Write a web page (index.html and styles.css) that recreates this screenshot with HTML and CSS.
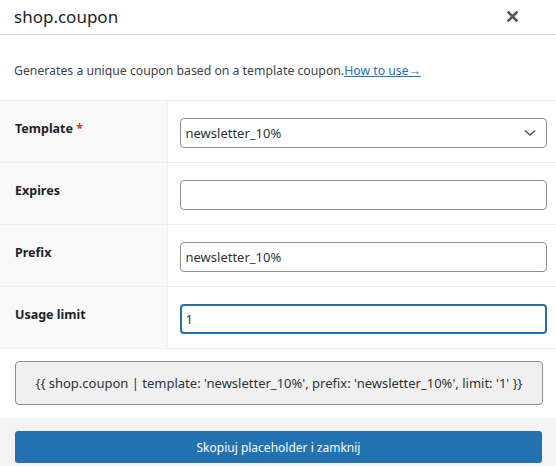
FILE: index.html
```html
<!DOCTYPE html>
<html>
<head>
    <meta charset="utf-8" />
    <title>shop.coupon</title>
    <link rel="stylesheet" href="styles.css">
</head>
<body>
    <div class="modal">
        <div class="modal_header">
            <h1>shop.coupon</h1>
            <button class="close_btn" type="button">
                <svg width="11" height="11" viewBox="0 0 11 11"><path d="M1.5 1.5L9.5 9.5M9.5 1.5L1.5 9.5" stroke="#50575e" stroke-width="2.6" stroke-linecap="square" /></svg>
            </button>
        </div>

        <p class="intro">Generates a unique coupon based on a template coupon.<a href="#">How to use→</a></p>

        <table class="form_table">
            <tr>
                <th>Template <span class="req">*</span></th>
                <td>
                    <div class="select_box">
                        <span>newsletter_10%</span>
                        <svg width="12" height="8" viewBox="0 0 12 8"><path d="M1 1.5L6 6L11 1.5" fill="none" stroke="#50575e" stroke-width="1.6" /></svg>
                    </div>
                </td>
            </tr>
            <tr>
                <th>Expires</th>
                <td><input type="text" class="field" value="" /></td>
            </tr>
            <tr>
                <th>Prefix</th>
                <td><input type="text" class="field" value="newsletter_10%" /></td>
            </tr>
            <tr>
                <th>Usage limit</th>
                <td><input type="text" class="field field_focus" value="1" /></td>
            </tr>
        </table>

        <div class="output">
            <div class="placeholder">{{ shop.coupon | template: 'newsletter_10%', prefix: 'newsletter_10%', limit: '1' }}</div>
        </div>

        <div class="footer">
            <button class="copy_btn" type="button">Skopiuj placeholder i zamknij</button>
        </div>
    </div>
</body>
</html>
```

FILE: styles.css
```css
* {
    font-family: "Noto Sans", "Open Sans", sans-serif;
    box-sizing: border-box;
}

body {
    margin: 0;
    background: #fff;
    color: #3c434a;
}

.modal {
    width: 556px;
    height: 466px;
    display: flex;
    flex-direction: column;
}

.modal_header {
    height: 35px;
    display: flex;
    align-items: center;
    justify-content: space-between;
    padding: 0 38px 2px 14px;
    border-bottom: 1px solid #dcdcde;
}

h1 {
    margin: 0;
    font-size: 17px;
    font-weight: 400;
    color: #1d2327;
}

.close_btn {
    border: none;
    background: none;
    padding: 0;
    display: flex;
}

.intro {
    margin: 0;
    padding: 28px 14px 21px;
    font-size: 12.25px;
    line-height: 16px;
    color: #3c434a;
}

    .intro a {
        color: #2271b1;
    }

.form_table {
    width: 100%;
    border-collapse: collapse;
    border-top: 1px solid #f0f0f0;
}

    .form_table tr {
        height: 62px;
        border-bottom: 1px solid #f0f0f0;
    }

    .form_table th {
        width: 167px;
        text-align: left;
        vertical-align: top;
        padding: 19px 10px 0 15px;
        background: #f9f9f9;
        border-right: 1px solid #f0f0f0;
        font-size: 12.5px;
        font-weight: 700;
        color: #1d2327;
    }

    .form_table td {
        vertical-align: top;
        padding: 17px 9px 0 12px;
    }

.req {
    color: #d63638;
}

.select_box,
.field {
    width: 100%;
    height: 30px;
    border: 1px solid #8c8f94;
    border-radius: 4px;
    background: #fff;
    font-size: 13px;
    color: #2c3338;
}

.select_box {
    display: flex;
    align-items: center;
    justify-content: space-between;
    padding: 0 10px 0 5px;
}

.field {
    display: block;
    padding: 0 5px;
    outline: none;
}

.field_focus {
    border: 2px solid #2271b1;
    padding: 0 4px;
}

.output {
    padding: 12px 13px 13px 15px;
}

.placeholder {
    height: 44px;
    display: flex;
    align-items: center;
    justify-content: center;
    background: #f0f0f0;
    border: 1px solid #8c8f94;
    border-radius: 4px;
    font-size: 13px;
    color: #2c3338;
}

.footer {
    flex: 1;
    background: #f3f3f3;
    padding: 13px 14px 0 15px;
}

.copy_btn {
    width: 100%;
    height: 32px;
    border: none;
    border-radius: 3px;
    background: #2271b1;
    color: #fff;
    font-size: 12px;
}
```
